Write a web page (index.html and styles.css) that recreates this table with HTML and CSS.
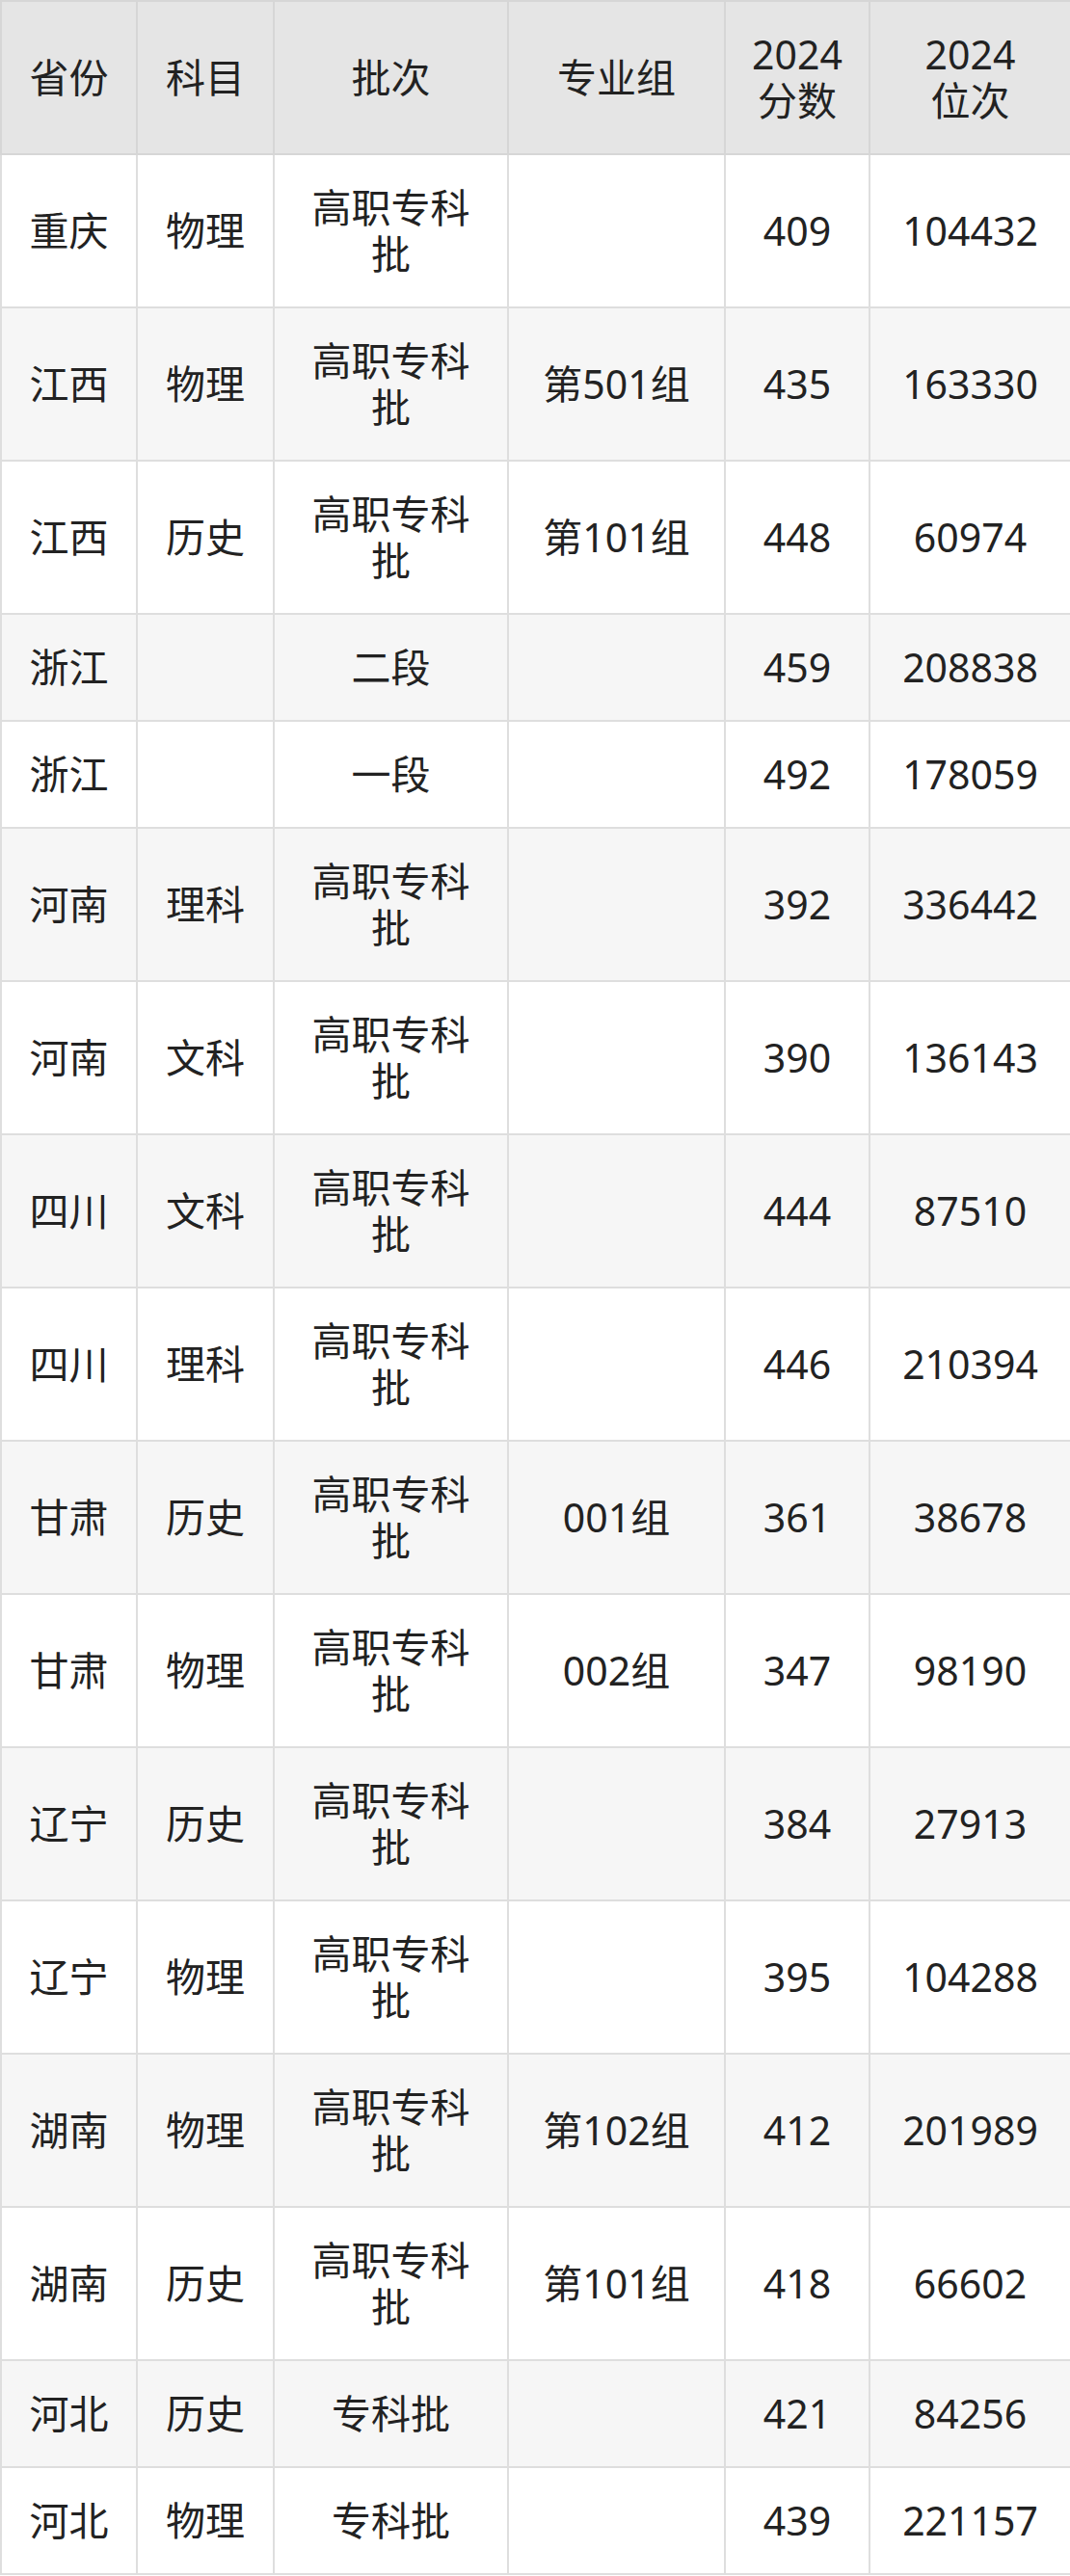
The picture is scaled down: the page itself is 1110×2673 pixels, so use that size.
FILE: index.html
```html
<!DOCTYPE html>
<html lang="zh-CN">
<head>
<meta charset="utf-8">
<title>2024 分数位次</title>
<link rel="stylesheet" href="styles.css">
</head>
<body>
<table class="score-table">
  <colgroup>
    <col class="c-prov">
    <col class="c-subj">
    <col class="c-batch">
    <col class="c-group">
    <col class="c-score">
    <col class="c-rank">
  </colgroup>
  <thead>
    <tr>
      <th>省份</th>
      <th>科目</th>
      <th>批次</th>
      <th>专业组</th>
      <th>2024<br>分数</th>
      <th>2024<br>位次</th>
    </tr>
  </thead>
  <tbody>
    <tr><td>重庆</td><td>物理</td><td>高职专科<br>批</td><td></td><td>409</td><td>104432</td></tr>
    <tr><td>江西</td><td>物理</td><td>高职专科<br>批</td><td>第501组</td><td>435</td><td>163330</td></tr>
    <tr><td>江西</td><td>历史</td><td>高职专科<br>批</td><td>第101组</td><td>448</td><td>60974</td></tr>
    <tr><td>浙江</td><td></td><td>二段</td><td></td><td>459</td><td>208838</td></tr>
    <tr><td>浙江</td><td></td><td>一段</td><td></td><td>492</td><td>178059</td></tr>
    <tr><td>河南</td><td>理科</td><td>高职专科<br>批</td><td></td><td>392</td><td>336442</td></tr>
    <tr><td>河南</td><td>文科</td><td>高职专科<br>批</td><td></td><td>390</td><td>136143</td></tr>
    <tr><td>四川</td><td>文科</td><td>高职专科<br>批</td><td></td><td>444</td><td>87510</td></tr>
    <tr><td>四川</td><td>理科</td><td>高职专科<br>批</td><td></td><td>446</td><td>210394</td></tr>
    <tr><td>甘肃</td><td>历史</td><td>高职专科<br>批</td><td>001组</td><td>361</td><td>38678</td></tr>
    <tr><td>甘肃</td><td>物理</td><td>高职专科<br>批</td><td>002组</td><td>347</td><td>98190</td></tr>
    <tr><td>辽宁</td><td>历史</td><td>高职专科<br>批</td><td></td><td>384</td><td>27913</td></tr>
    <tr><td>辽宁</td><td>物理</td><td>高职专科<br>批</td><td></td><td>395</td><td>104288</td></tr>
    <tr><td>湖南</td><td>物理</td><td>高职专科<br>批</td><td>第102组</td><td>412</td><td>201989</td></tr>
    <tr><td>湖南</td><td>历史</td><td>高职专科<br>批</td><td>第101组</td><td>418</td><td>66602</td></tr>
    <tr><td>河北</td><td>历史</td><td>专科批</td><td></td><td>421</td><td>84256</td></tr>
    <tr><td>河北</td><td>物理</td><td>专科批</td><td></td><td>439</td><td>221157</td></tr>
  </tbody>
</table>
</body>
</html>
```

FILE: styles.css
```css
html, body {
  margin: 0;
  padding: 0;
  background: #ffffff;
}

body {
  font-family: "Noto Sans", "Noto Sans CJK SC", sans-serif;
  color: #222222;
}

.score-table {
  width: 1110px;
  table-layout: fixed;
  border-collapse: collapse;
  font-size: 41px;
  line-height: 48px;
}

.c-prov { width: 141px; }
.c-subj { width: 142px; }
.c-batch { width: 243px; }
.c-group { width: 225px; }
.c-score { width: 150px; }
.c-rank { width: 209px; }

.score-table th,
.score-table td {
  border: 2px solid #dedede;
  padding: 30px 2px 31px;
  text-align: center;
  vertical-align: middle;
  font-weight: 400;
}

.score-table thead th {
  background: #e5e5e5;
  border-color: #d6d6d6;
}

.score-table tbody tr:nth-child(even) td {
  background: #f6f6f6;
}
```
